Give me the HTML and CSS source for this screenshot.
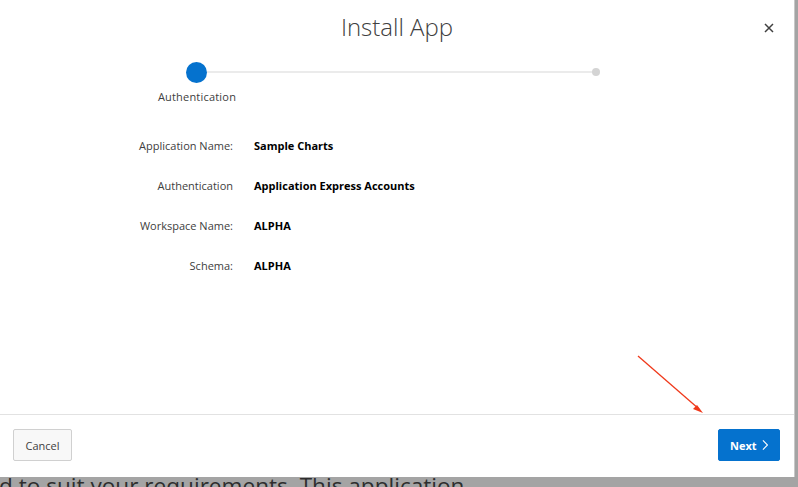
FILE: index.html
```html
<!DOCTYPE html>
<html>
<head>
<meta charset="utf-8">
<link rel="stylesheet" href="styles.css">
</head>
<body>
<div class="dialog">
  <div class="header">
    <h1 class="title">Install App</h1>
    <button class="close" aria-label="Close">
      <svg width="10" height="10" viewBox="0 0 10 10"><path d="M1 1L9 9M9 1L1 9" stroke="#404040" stroke-width="1.5"/></svg>
    </button>
  </div>
  <div class="progress">
    <div class="track">
      <span class="dot-active"></span>
      <span class="line"></span>
      <span class="dot-end"></span>
    </div>
    <div class="step-label">Authentication</div>
  </div>
  <div class="form">
    <div class="row"><span class="lbl">Application Name:</span><span class="val">Sample Charts</span></div>
    <div class="row"><span class="lbl">Authentication</span><span class="val">Application Express Accounts</span></div>
    <div class="row"><span class="lbl">Workspace Name:</span><span class="val">ALPHA</span></div>
    <div class="row"><span class="lbl">Schema:</span><span class="val">ALPHA</span></div>
  </div>
  <div class="footer">
    <button class="btn cancel">Cancel</button>
    <button class="btn next">Next <svg width="7" height="12" viewBox="0 0 7 12"><path d="M1 1l5 5-5 5" fill="none" stroke="#fff" stroke-width="1.2"/></svg></button>
  </div>
  <svg class="arrow" width="80" height="70" viewBox="0 0 80 70">
    <line x1="2" y1="2" x2="63" y2="55" stroke="#f0391b" stroke-width="1.3"/>
    <path d="M67 59L57 55L61 51Z" fill="#f0391b"/>
  </svg>
</div>
<div class="behind">d to suit your requirements. This application</div>
</body>
</html>
```
FILE: styles.css
```css
html, body {
  margin: 0;
  padding: 0;
}
body {
  width: 798px;
  height: 487px;
  overflow: hidden;
  background: #a4a4a4;
  font-family: "Open Sans", "DejaVu Sans", sans-serif;
}
.dialog {
  position: relative;
  width: 795px;
  height: 477px;
  background: #fff;
  border-right: 1px solid #c8c8c8;
  display: flex;
  flex-direction: column;
  box-sizing: border-box;
}
.header {
  height: 56px;
  position: relative;
  display: flex;
  align-items: center;
  justify-content: center;
}
.title {
  margin: 0;
  font-weight: 300;
  font-size: 24px;
  color: #404040;
  line-height: 1;
  margin-top: -2px;
}
.close {
  position: absolute;
  right: 15px;
  top: 18px;
  width: 20px;
  height: 20px;
  border: 0;
  background: none;
  padding: 0;
  display: flex;
  align-items: center;
  justify-content: center;
}
.progress {
  padding-left: 147px;
}
.track {
  display: flex;
  align-items: center;
  height: 22px;
  margin-left: 39px;
  margin-top: 5px;
}
.dot-active {
  width: 21px;
  height: 21px;
  border-radius: 50%;
  background: #0572ce;
  flex: none;
}
.line {
  width: 387px;
  height: 2px;
  background: #ebebeb;
}
.dot-end {
  width: 8px;
  height: 8px;
  border-radius: 50%;
  background: #d4d4d4;
  margin-left: -2px;
}
.step-label {
  width: 100px;
  text-align: center;
  font-size: 11px;
  color: #404040;
  margin-top: 6px;
  letter-spacing: 0.2px;
}
.form {
  margin-top: 33px;
  display: flex;
  flex-direction: column;
  gap: 24px;
  flex: 1;
}
.row {
  display: flex;
  align-items: center;
  height: 16px;
  font-size: 11px;
}
.lbl {
  width: 254px;
  text-align: right;
  color: #404040;
  padding-right: 21px;
  box-sizing: border-box;
}
.val {
  font-weight: 700;
  color: #000;
}
.footer {
  border-top: 1px solid #e2e2e2;
  height: 62px;
  display: flex;
  align-items: center;
  justify-content: space-between;
  padding: 0 14px 0 13px;
}
.btn {
  height: 32px;
  border-radius: 2px;
  font-family: inherit;
  font-size: 11px;
  padding: 0 11px;
  display: flex;
  align-items: center;
  gap: 5px;
  margin-bottom: 2px;
}
.cancel {
  background: #f8f8f8;
  border: 1px solid #d0d0d0;
  color: #404040;
  width: 59px;
  justify-content: center;
}
.next {
  background: #0572ce;
  border: 1px solid #0572ce;
  color: #fff;
  font-weight: 700;
  width: 62px;
  justify-content: center;
}
.arrow {
  position: absolute;
  left: 636px;
  top: 354px;
}
.behind {
  font-size: 22.6px;
  color: #2e2e2e;
  line-height: 24px;
  margin-top: -3px;
  margin-left: -1px;
  white-space: nowrap;
}
```
